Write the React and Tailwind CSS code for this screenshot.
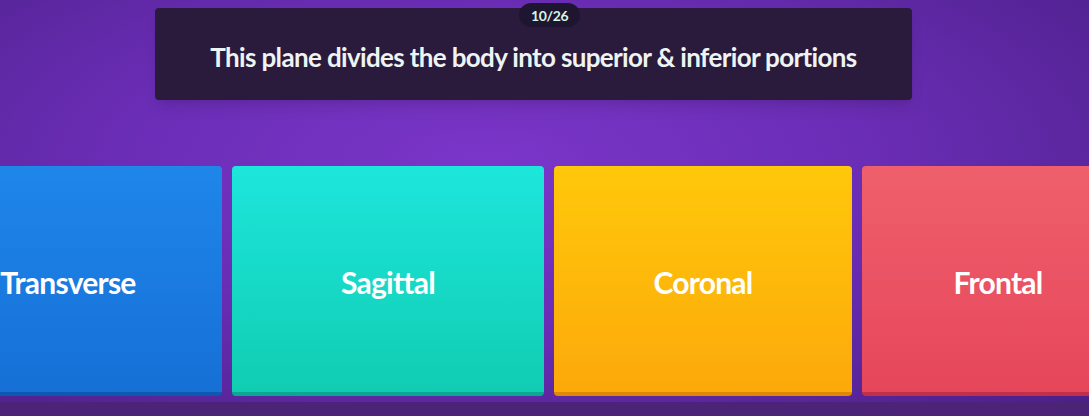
const answers = [
  { label: "Transverse", cls: "bg-gradient-to-b from-[#1f86ea] to-[#1670d6] border-[#0f58b0]", w: "w-[308px]" },
  { label: "Sagittal", cls: "bg-gradient-to-b from-[#1de6dc] to-[#10cdb2] border-[#0aa894]", w: "w-[312px]" },
  { label: "Coronal", cls: "bg-gradient-to-b from-[#ffc80a] to-[#fca90a] border-[#e08806]", w: "w-[298px]" },
  { label: "Frontal", cls: "bg-gradient-to-b from-[#ef5f6c] to-[#e6465a] border-[#c0304a]", w: "w-[272px]" },
];

export default function App() {
  return (
    <div
      className="w-[1089px] h-[416px] overflow-hidden flex flex-col bg-[radial-gradient(ellipse_at_45%_40%,#7b36c9_0%,#6a2db5_45%,#4a1f86_100%)]"
      style={{ fontFamily: "Lato, 'Noto Sans', sans-serif" }}
    >
      {/* Question */}
      <div className="relative mt-[8px] ml-[155px] w-[757px] h-[92px] bg-[#2a1a3c] rounded-sm flex items-center justify-center shadow-lg">
        <div className="absolute -top-[5px] left-[364px] h-[24px] px-3 rounded-full bg-[#1e1630] flex items-center">
          <span className="text-[14px] font-bold text-[#d8f4e4] tracking-tight">10/26</span>
        </div>
        <p className="mt-[6px] text-[26px] font-bold text-[#eef4f2] tracking-tight">
          This plane divides the body into superior &amp; inferior portions
        </p>
      </div>

      {/* Answers */}
      <div className="mt-[66px] ml-[-86px] flex gap-[10px] h-[230px]">
        {answers.map((a) => (
          <div
            key={a.label}
            className={`${a.w} shrink-0 rounded-[4px] border-b-[4px] flex items-center justify-center ${a.cls}`}
          >
            <span className="mt-[6px] text-[30px] font-bold text-white tracking-tight">{a.label}</span>
          </div>
        ))}
      </div>

      <div className="flex-1 mt-[6px] bg-[#4b2478]" />
    </div>
  );
}
